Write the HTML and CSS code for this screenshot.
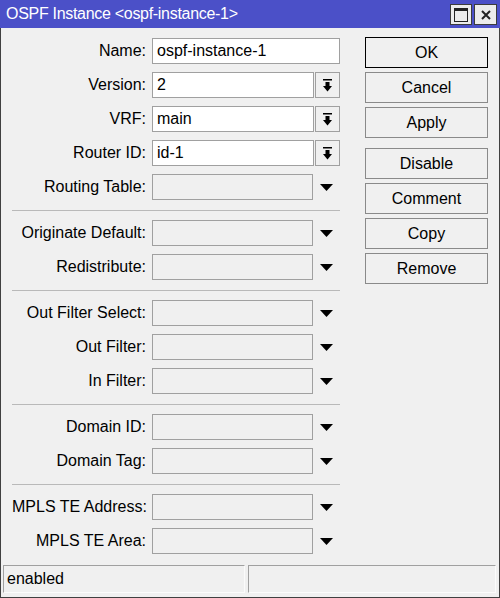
FILE: index.html
```html
<!DOCTYPE html>
<html>
<head>
<meta charset="utf-8">
<link rel="stylesheet" href="styles.css">
</head>
<body>
<div class="window">
  <div class="titlebar">
    <span class="title">OSPF Instance &lt;ospf-instance-1&gt;</span>
    <div class="tb-buttons">
      <div class="tb-btn"><svg width="14" height="14" viewBox="0 0 14 14"><rect x="0.5" y="0.5" width="13" height="13" fill="none" stroke="#222" stroke-width="1"/><rect x="0" y="0" width="14" height="3" fill="#222"/></svg></div>
      <div class="tb-btn close"><svg width="10" height="10" viewBox="0 0 10 10"><path d="M1 1 L9 9 M9 1 L1 9" stroke="#222" stroke-width="2" fill="none"/></svg></div>
    </div>
  </div>
  <div class="frame">
    <div class="main">
      <div class="form">
        <div class="row"><div class="label">Name:</div><div class="input wide">ospf-instance-1</div></div>
        <div class="row"><div class="label">Version:</div><div class="input">2</div><div class="ddbtn"><svg width="9" height="13" viewBox="0 0 9 13"><rect x="0" y="0" width="9" height="1.5"/><rect x="2.5" y="3" width="4" height="4.5"/><polygon points="0,7 9,7 4.5,12.5"/></svg></div></div>
        <div class="row"><div class="label">VRF:</div><div class="input">main</div><div class="ddbtn"><svg width="9" height="13" viewBox="0 0 9 13"><rect x="0" y="0" width="9" height="1.5"/><rect x="2.5" y="3" width="4" height="4.5"/><polygon points="0,7 9,7 4.5,12.5"/></svg></div></div>
        <div class="row"><div class="label">Router ID:</div><div class="input">id-1</div><div class="ddbtn"><svg width="9" height="13" viewBox="0 0 9 13"><rect x="0" y="0" width="9" height="1.5"/><rect x="2.5" y="3" width="4" height="4.5"/><polygon points="0,7 9,7 4.5,12.5"/></svg></div></div>
        <div class="row"><div class="label">Routing Table:</div><div class="input empty"></div><div class="arrow"><svg width="13" height="7" viewBox="0 0 13 7"><polygon points="0,0 13,0 6.5,7"/></svg></div></div>
        <div class="sep"></div>
        <div class="row"><div class="label">Originate Default:</div><div class="input empty"></div><div class="arrow"><svg width="13" height="7" viewBox="0 0 13 7"><polygon points="0,0 13,0 6.5,7"/></svg></div></div>
        <div class="row"><div class="label">Redistribute:</div><div class="input empty"></div><div class="arrow"><svg width="13" height="7" viewBox="0 0 13 7"><polygon points="0,0 13,0 6.5,7"/></svg></div></div>
        <div class="sep"></div>
        <div class="row"><div class="label">Out Filter Select:</div><div class="input empty"></div><div class="arrow"><svg width="13" height="7" viewBox="0 0 13 7"><polygon points="0,0 13,0 6.5,7"/></svg></div></div>
        <div class="row"><div class="label">Out Filter:</div><div class="input empty"></div><div class="arrow"><svg width="13" height="7" viewBox="0 0 13 7"><polygon points="0,0 13,0 6.5,7"/></svg></div></div>
        <div class="row"><div class="label">In Filter:</div><div class="input empty"></div><div class="arrow"><svg width="13" height="7" viewBox="0 0 13 7"><polygon points="0,0 13,0 6.5,7"/></svg></div></div>
        <div class="sep"></div>
        <div class="row"><div class="label">Domain ID:</div><div class="input empty"></div><div class="arrow"><svg width="13" height="7" viewBox="0 0 13 7"><polygon points="0,0 13,0 6.5,7"/></svg></div></div>
        <div class="row"><div class="label">Domain Tag:</div><div class="input empty"></div><div class="arrow"><svg width="13" height="7" viewBox="0 0 13 7"><polygon points="0,0 13,0 6.5,7"/></svg></div></div>
        <div class="sep"></div>
        <div class="row"><div class="label">MPLS TE Address:</div><div class="input empty"></div><div class="arrow"><svg width="13" height="7" viewBox="0 0 13 7"><polygon points="0,0 13,0 6.5,7"/></svg></div></div>
        <div class="row"><div class="label">MPLS TE Area:</div><div class="input empty"></div><div class="arrow"><svg width="13" height="7" viewBox="0 0 13 7"><polygon points="0,0 13,0 6.5,7"/></svg></div></div>
      </div>
      <div class="actions">
        <div class="btn default">OK</div>
        <div class="btn">Cancel</div>
        <div class="btn">Apply</div>
        <div class="btn group">Disable</div>
        <div class="btn">Comment</div>
        <div class="btn">Copy</div>
        <div class="btn">Remove</div>
      </div>
    </div>
    <div class="statusbar">
      <div class="panel left">enabled</div>
      <div class="panel right"></div>
    </div>
  </div>
</div>
</body>
</html>
```

FILE: styles.css
```css
* { box-sizing: border-box; }
body {
  margin: 0;
  font-family: "Liberation Sans", Arial, sans-serif;
  font-size: 16px;
  color: #000;
  background: #f0f0f0;
}
.window {
  width: 500px;
  height: 598px;
  display: flex;
  flex-direction: column;
  background: #f0f0f0;
}
.titlebar {
  height: 28px;
  flex: 0 0 28px;
  background: #4b50c8;
  color: #fff;
  display: flex;
  align-items: flex-start;
  padding-left: 6px;
}
.title {
  flex: 1;
  line-height: 28px;
  letter-spacing: -0.3px;
}
.tb-buttons {
  display: flex;
  gap: 2px;
  margin-top: 4px;
  padding-right: 3px;
}
.tb-btn {
  width: 22px;
  height: 21px;
  border: 1px solid #3c3c3c;
  background: #ececec;
  display: flex;
  align-items: center;
  justify-content: center;
}
.tb-btn.close { width: 23px; }
.frame {
  flex: 1;
  display: flex;
  flex-direction: column;
  border: 1px solid #404040;
  border-top: 0;
}
.main {
  flex: 1;
  display: flex;
  padding-top: 10px;
  padding-left: 11px;
}
.form {
  width: 328px;
  display: flex;
  flex-direction: column;
  gap: 8px;
}
.row {
  display: flex;
  align-items: center;
  height: 26px;
}
.label {
  width: 134px;
  margin-right: 6px;
  text-align: right;
  white-space: nowrap;
  line-height: 26px;
}
.input {
  width: 162px;
  height: 26px;
  border: 1px solid #a0a0a0;
  background: #fff;
  padding-left: 4px;
  line-height: 24px;
  white-space: nowrap;
}
.input.wide { width: 188px; }
.input.empty { background: #f0f0f0; width: 161px; margin-right: 1px; }
.ddbtn {
  width: 25px;
  height: 26px;
  margin-left: 1px;
  border: 1px solid #a0a0a0;
  background: #f0f0f0;
  display: flex;
  align-items: center;
  justify-content: center;
  padding-right: 1px;
}
.arrow {
  width: 25px;
  height: 26px;
  margin-left: 1px;
  display: flex;
  align-items: center;
  justify-content: center;
  padding-right: 2px;
  padding-top: 1px;
}
.sep {
  height: 1px;
  background: #b9b9b9;
  margin: 2px 0 1px;
}
.actions {
  margin-left: 25px;
  margin-top: -1px;
  width: 123px;
  display: flex;
  flex-direction: column;
  gap: 4px;
}
.btn {
  height: 31px;
  border: 1px solid #8a8a8a;
  background: #f0f0f0;
  display: flex;
  align-items: center;
  justify-content: center;
}
.btn.default { border-color: #000; }
.btn.group { margin-top: 6px; }
.statusbar {
  display: flex;
  gap: 3px;
  padding: 0 3px 4px 2px;
}
.panel {
  height: 28px;
  border: 1px solid #a0a0a0;
  border-right-color: #fbfbfb;
  border-bottom-color: #fbfbfb;
  padding-left: 3px;
  line-height: 26px;
}
.panel.left { width: 242px; }
.panel.right { flex: 1; }
```
